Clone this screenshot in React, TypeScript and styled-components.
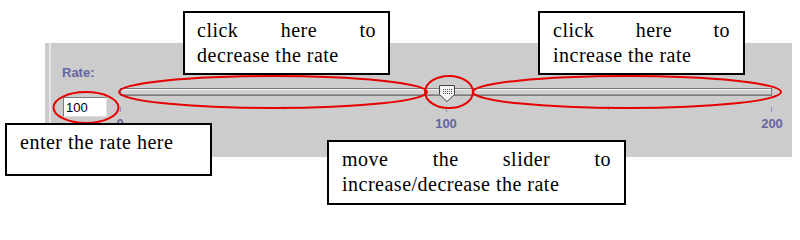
import React from "react";
import styled, { createGlobalStyle } from "styled-components";

const GlobalStyle = createGlobalStyle`
  html, body { margin: 0; padding: 0; background: #ffffff; }
  #root { width: 800px; height: 210px; }
`;

const Canvas = styled.div`
  position: relative;
  width: 800px;
  height: 210px;
  overflow: hidden;
  box-sizing: border-box;
  padding: 43px 0 0 45px;
  background: #ffffff;
`;

const Panel = styled.div`
  width: 747px;
  height: 114px;
  box-sizing: border-box;
  padding: 22px 0 0 17px;
  background: #cccccc;
  box-shadow: inset 4px 0 0 #cccccc, inset 6px 0 0 #e6e6e6;
  display: flex;
  align-items: flex-start;
  font-family: "Liberation Sans", Arial, sans-serif;
`;

const LeftCol = styled.div`
  width: 58px;
  display: flex;
  flex-direction: column;
`;

const RateLabel = styled.div`
  font-size: 13px;
  font-weight: bold;
  line-height: 15px;
  height: 15px;
  color: #66669e;
`;

const RateInput = styled.input`
  width: 44px;
  height: 20px;
  margin: 17px 0 0 1px;
  box-sizing: border-box;
  border: 1px solid;
  border-color: #7c7c7c #dedede #dedede #7c7c7c;
  background: #ffffff;
  padding: 0 0 0 2px;
  font-family: "Liberation Sans", Arial, sans-serif;
  font-size: 13px;
  color: #000000;
  outline: none;
`;

const SliderCol = styled.div`
  width: 652px;
  margin-top: 20px;
  display: flex;
  flex-direction: column;
`;

const ThumbArea = styled.div`
  position: relative;
  height: 17px;
`;

const Track = styled.div`
  margin-top: 3px;
  height: 8px;
  box-sizing: border-box;
  border: 1px solid #7b7b7b;
  background: #d2d2d2;
  box-shadow: inset 0 1px 0 #f2f2f2, inset 0 -1px 0 #9a9a9a;
`;

const ThumbWrap = styled.div`
  position: absolute;
  top: 0;
  width: 16px;
  height: 17px;
  margin-left: -7px;
`;

const TickRow = styled.div`
  display: flex;
  justify-content: space-between;
  align-items: flex-start;
  margin-top: 5px;
  height: 5px;
`;

const Tick = styled.div<{ $major: boolean }>`
  width: 1px;
  height: ${(p) => (p.$major ? 5 : 3)}px;
  background: #9494c4;
`;

const LabelRow = styled.div`
  display: flex;
  justify-content: space-between;
  margin-top: 4px;
`;

const TickLabel = styled.div`
  width: 0;
  display: flex;
  justify-content: center;
  white-space: nowrap;
  font-size: 13px;
  font-weight: bold;
  line-height: 15px;
  color: #66669e;
`;

const Marks = styled.svg`
  position: absolute;
  left: 0;
  top: 0;
  width: 800px;
  height: 210px;
  pointer-events: none;
`;

const Callout = styled.div<{ $x: number; $y: number; $w: number; $h: number; $pl: number }>`
  position: absolute;
  left: ${(p) => p.$x}px;
  top: ${(p) => p.$y}px;
  width: ${(p) => p.$w}px;
  height: ${(p) => p.$h}px;
  box-sizing: border-box;
  padding: 5px ${(p) => p.$pl}px 0 ${(p) => p.$pl}px;
  background: #ffffff;
  border: 2px solid #000000;
  font-family: "Liberation Serif", "Times New Roman", serif;
  font-size: 20px;
  line-height: 25px;
  letter-spacing: 0.5px;
  color: #000000;
`;

const Line = styled.div<{ $justify?: boolean }>`
  white-space: ${(p) => (p.$justify ? "normal" : "nowrap")};
  text-align: ${(p) => (p.$justify ? "justify" : "left")};
  text-align-last: ${(p) => (p.$justify ? "justify" : "left")};
`;

const Thumb = () => (
  <svg width="16" height="17" viewBox="0 0 16 17">
    <defs>
      <pattern id="dots" width="2" height="2" patternUnits="userSpaceOnUse">
        <rect x="0" y="0" width="1" height="1" fill="#555555" />
      </pattern>
    </defs>
    <polygon points="0.5,0.5 15.5,0.5 15.5,9.5 8,16.5 0.5,9.5" fill="#f4f4f4" stroke="#444444" strokeWidth="1" />
    <rect x="3" y="3" width="10" height="6" fill="url(#dots)" />
  </svg>
);

const ticks = [0, 50, 100, 150, 200];
const labels = ["0", "100", "200"];
const value = 100;
const max = 200;

export default function App() {
  return (
    <>
      <GlobalStyle />
      <Canvas>
        <Panel>
          <LeftCol>
            <RateLabel>Rate:</RateLabel>
            <RateInput defaultValue="100" />
          </LeftCol>
          <SliderCol>
            <ThumbArea>
              <Track />
              <ThumbWrap style={{ left: `${(value / max) * 100}%` }}>
                <Thumb />
              </ThumbWrap>
            </ThumbArea>
            <TickRow>
              {ticks.map((t) => (
                <Tick key={t} $major={t % 100 === 0} />
              ))}
            </TickRow>
            <LabelRow>
              {labels.map((l) => (
                <TickLabel key={l}>{l}</TickLabel>
              ))}
            </LabelRow>
          </SliderCol>
        </Panel>

        <Marks viewBox="0 0 800 210">
          <g fill="none" stroke="#e60000" strokeWidth="2">
            <ellipse cx="86" cy="107.5" rx="32.5" ry="15.5" />
            <ellipse cx="273" cy="92" rx="154" ry="16" />
            <ellipse cx="449" cy="92" rx="24" ry="16" />
            <ellipse cx="627" cy="92" rx="154" ry="16" />
          </g>
        </Marks>

        <Callout $x={183} $y={11} $w={207} $h={64} $pl={12}>
          <Line $justify>click here to</Line>
          <Line>decrease the rate</Line>
        </Callout>
        <Callout $x={538} $y={11} $w={207} $h={64} $pl={13}>
          <Line $justify>click here to</Line>
          <Line>increase the rate</Line>
        </Callout>
        <Callout $x={5} $y={123} $w={207} $h={53} $pl={13}>
          <Line>enter the rate here</Line>
        </Callout>
        <Callout $x={327} $y={140} $w={299} $h={65} $pl={13}>
          <Line $justify>move the slider to</Line>
          <Line>increase/decrease the rate</Line>
        </Callout>
      </Canvas>
    </>
  );
}
